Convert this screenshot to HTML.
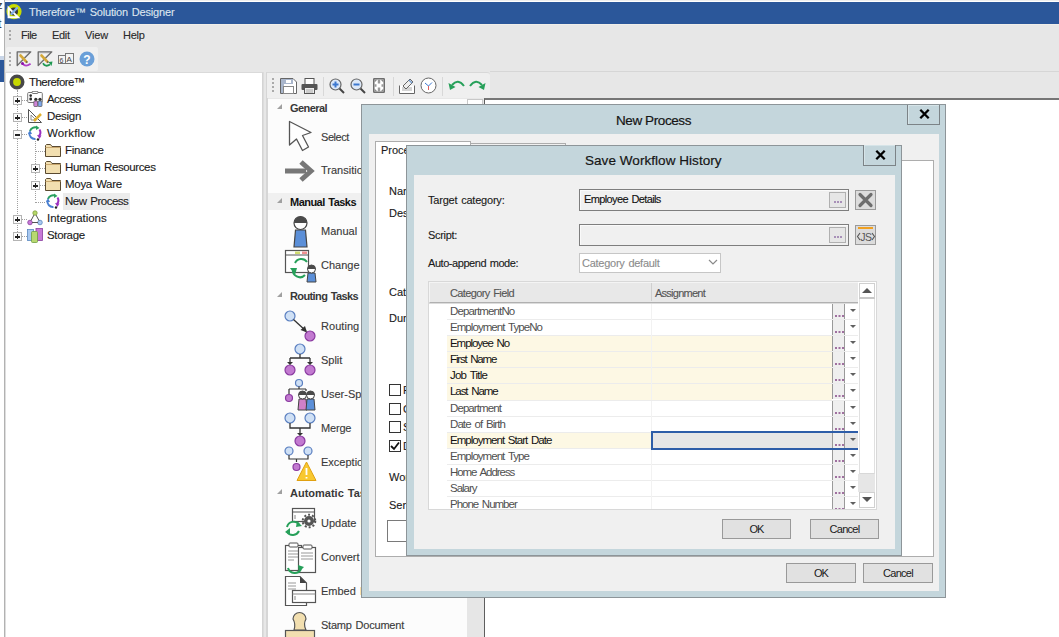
<!DOCTYPE html>
<html><head><meta charset="utf-8">
<style>
*{margin:0;padding:0;box-sizing:border-box}
html,body{width:1059px;height:637px;overflow:hidden;background:#fff;font-family:"Liberation Sans",sans-serif;font-size:12px;color:#222}
.a{position:absolute}
.t{position:absolute;white-space:nowrap;line-height:14px;word-spacing:1px;-webkit-text-stroke:0.12px currentColor}
/* title */
#strip{left:0;top:0;width:5px;height:637px;background:#fff;border-right:1px solid #b2b2b2}
#titlebar{left:5px;top:2px;width:1054px;height:23px;background:#2b579a;border-bottom:1px solid #f0eee9}
#titletxt{color:#dde5ee;font-size:11px}
#app{left:5px;top:23px;width:1054px;height:614px;background:#e7e7e7}
.menu{top:28px;font-size:11px;color:#2a2a2a}
.grip3{width:2px;height:2px;background:#a8a8a8;box-shadow:0 4px 0 #a8a8a8,0 8px 0 #a8a8a8}
.grip{width:2px;height:2px;background:#aaa;box-shadow:0 4px 0 #aaa,0 8px 0 #aaa,0 12px 0 #aaa}
#tbar1{left:6px;top:47px;width:92px;height:24px;background:#f0f0f0;border-radius:2px}
/* tree */
#tree{left:5px;top:72px;width:258px;height:565px;background:#fff;border-left:1px solid #dedede;border-top:1px solid #dadada;border-right:1px solid #d4d4d4}
.ti{font-size:11.5px;color:#1b1b1b}
.exp{position:absolute;width:9px;height:9px;border:1px solid #b4b4b4;background:#fbfbfb}
.exp:before{content:"";position:absolute;left:1px;top:3px;width:5px;height:1.5px;background:#222}
.exp.p:after{content:"";position:absolute;left:2.75px;top:1px;width:1.5px;height:5px;background:#222}
.vd{position:absolute;width:0;border-left:1px dotted #a0a0a0}
.hd{position:absolute;height:0;border-top:1px dotted #a0a0a0}
/* palette */
#splitline{left:266px;top:72px;width:2px;height:565px;background:#d6d6d6}
#ptbar{left:267px;top:72px;width:223px;height:26px;background:#efefef;border-top:1px solid #d8d8d8;border-radius:0 3px 0 0}
#pal{left:268px;top:99px;width:199px;height:538px;background:#fcfcfc}
#pscroll{left:467px;top:99px;width:17px;height:538px;background:#e6e6e6}
#pline{left:484px;top:98px;width:1px;height:539px;background:#5e5e5e}
#canvas{left:484px;top:98px;width:575px;height:539px;background:#fff;border-top:2px solid #767676;border-left:1px solid #5e5e5e}
.ph{font-size:11px;font-weight:bold;color:#383838;-webkit-text-stroke:0}
.pi{font-size:11px;color:#3a3a3a}
.tri{position:absolute;width:0;height:0;border-left:5px solid transparent;border-bottom:5px solid #a0a0a0}
/* dialogs */
.dlg{position:absolute;background:#c4d6dc;border:1px solid #8d9599}
.client{position:absolute;background:#f0f0f0}
.dtitle{position:absolute;font-size:13.5px;color:#151515;white-space:nowrap;line-height:14px;-webkit-text-stroke:0.2px currentColor}
.xbtn{position:absolute;border:1px solid #7c8387;border-top:none;background:#c4d6dc}
.xbtn svg{position:absolute;left:11px;top:4px}
.btn{position:absolute;background:#e1e1e1;border:1px solid #999;text-align:center;font-size:11px;color:#1a1a1a;line-height:18px}
.lbl{font-size:11px;color:#1a1a1a}
.inp{position:absolute;background:#f0f0f0;border:1px solid #7e7e7e;box-shadow:inset 1px 1px 0 #fafafa}
.dots{position:absolute;background:#e6e6e6;border:1px solid #b0b0b0}
.dots:after{content:"";position:absolute;left:4px;bottom:4px;width:2px;height:2px;background:#a890b8;box-shadow:3px 0 0 #a890b8,6px 0 0 #a890b8}
/* grid */
#grid{left:428px;top:281px;width:449px;height:229px;background:#fff;border:1px solid #d8d8d8}
.row{position:absolute;left:18px;width:411px;height:16px;border-bottom:1px solid #ececec}
.ybg{position:absolute;left:0;top:0;width:385px;height:15px;background:#fdf8e4}
.ct{position:absolute;left:3px;top:0px;font-size:11.5px;word-spacing:1.5px;color:#505050;white-space:nowrap;line-height:14px}
.row .ybg+.ct{color:#111}
.cdiv{position:absolute;left:204px;top:0;width:1px;height:16px;background:#f2f2f2}
.rdots{position:absolute;left:385px;top:0px;width:13px;height:15px;background:#efefef;border-left:1px solid #9a9a9a;border-right:1px solid #9a9a9a}
.rdots:after{content:"";position:absolute;left:2px;bottom:2px;width:2px;height:2px;background:#a070a0;box-shadow:3.5px 0 0 #a070a0,7px 0 0 #a070a0}
.rarr{position:absolute;left:403px;top:5px;width:0;height:0;border-left:3px solid transparent;border-right:3px solid transparent;border-top:3px solid #606060}
/*FIT*/#titletxt{letter-spacing:-0.185px}#x3{letter-spacing:-0.509px}#x4{letter-spacing:-0.317px}#x5{letter-spacing:-0.139px}#x6{letter-spacing:-0.281px}#x7{letter-spacing:-0.556px}#x8{letter-spacing:-0.596px}#x9{letter-spacing:-0.302px}#x10{letter-spacing:0.153px}#x11{letter-spacing:-0.346px}#x12{letter-spacing:-0.382px}#x13{letter-spacing:-0.286px}#x14{letter-spacing:-0.495px}#x15{letter-spacing:-0.042px}#x16{letter-spacing:-0.369px}#x17{letter-spacing:-0.567px}#x18{letter-spacing:-0.430px}#x20{letter-spacing:-0.527px}#x23{letter-spacing:-0.614px}#x24{letter-spacing:0.040px}#x25{letter-spacing:-0.021px}#x27{letter-spacing:-0.177px}#x33{letter-spacing:-0.213px}#x34{letter-spacing:-0.412px}#x48{letter-spacing:0.050px}#x49{letter-spacing:-0.211px}#x50{letter-spacing:-0.312px}#x51{letter-spacing:-0.449px}#x52{letter-spacing:-0.618px}#x54{letter-spacing:-0.257px}#x57{letter-spacing:-0.610px}#x58{letter-spacing:-0.748px}#g1{letter-spacing:-0.866px}#g2{letter-spacing:-0.944px}#g3{letter-spacing:-1.050px}#g4{letter-spacing:-1.143px}#g5{letter-spacing:-0.814px}#g6{letter-spacing:-1.057px}#g7{letter-spacing:-0.909px}#g8{letter-spacing:-0.917px}#g9{letter-spacing:-0.976px}#g10{letter-spacing:-0.956px}#g11{letter-spacing:-1.053px}#g12{letter-spacing:-1.002px}#g13{letter-spacing:-1.013px}#x46{letter-spacing:-0.853px}#x47{letter-spacing:-0.708px}#x55{letter-spacing:-0.853px}#x56{letter-spacing:-0.708px}/*ENDFIT*/
</style></head><body>
<div id="strip" class="a"></div>
<div class="a" style="left:0;top:56px;width:4px;height:4px;background:#c9d6e8"></div>
<div class="a" style="left:0;top:60px;width:4px;height:22px;background:#2b579a"></div>
<div class="a" style="left:0;top:0;width:4px;height:40px;overflow:hidden"><div id="x1" class="t" style="left:-3px;top:-2px;font-size:11px;color:#333">z</div><div id="x2" class="t" style="left:-2px;top:17px;font-size:12px;color:#3a3a4a">t</div></div>
<div id="app" class="a"></div>
<div id="titlebar" class="a"></div>
<div class="a" style="left:5px;top:0;width:1054px;height:1px;background:#eeeeee"></div>
<div id="titletxt" class="t" style="left:29px;top:5px">Therefore™ Solution Designer</div>


<!-- logo -->
<svg class="a" style="left:0px;top:0px" width="28" height="26" viewBox="0 0 28 26">
<circle cx="14" cy="11.6" r="5.8" fill="#3a3a3a" stroke="#c8dc00" stroke-width="3.6"/>
<path d="M7.6 5.4 L20.4 18.2 H7.6 Z M9.6 10.2 V16.2 H15.6 Z" fill="#fff" fill-rule="evenodd"/>
<path d="M11.5 14 L17 8" stroke="#86b0e8" stroke-width="2.2" stroke-linecap="round"/>
</svg>
<!-- menu -->
<div class="a grip3" style="left:9px;top:30px"></div>
<div id="x3" class="t menu" style="left:21px">File</div>
<div id="x4" class="t menu" style="left:52px">Edit</div>
<div id="x5" class="t menu" style="left:85px">View</div>
<div id="x6" class="t menu" style="left:123px">Help</div>
<div id="tbar1" class="a"></div>
<div class="a grip" style="left:9px;top:52px"></div>
<!-- toolbar icons -->
<svg class="a" style="left:16px;top:51px" width="16" height="16" viewBox="0 0 16 16"><path d="M1.2 0.8 H14.8 L1.2 14.6 Z" fill="#e2e2e2" stroke="#6a6a6a" stroke-width="1.3" stroke-linejoin="round"/><path d="M3.5 3 H10.5 L3.5 10 Z" fill="#f6f6f6"/><path d="M4.5 4.5 L10.5 10.8" stroke="#d4a838" stroke-width="2.6" stroke-linecap="round"/><path d="M10.2 10.5 L11.2 11.5" stroke="#555" stroke-width="1.5"/><path d="M6.8 12.8 Q9.5 16.5 14.6 12.8" stroke="#b040c8" stroke-width="1.8" fill="none"/><circle cx="6.5" cy="12.5" r="1.5" fill="#8a10a8"/></svg>
<svg class="a" style="left:37px;top:51px" width="16" height="16" viewBox="0 0 16 16"><path d="M1.2 0.8 H14.8 L1.2 14.6 Z" fill="#e2e2e2" stroke="#6a6a6a" stroke-width="1.3" stroke-linejoin="round"/><path d="M3.5 3 H10.5 L3.5 10 Z" fill="#f6f6f6"/><path d="M4.5 4.5 L10.5 10.8" stroke="#d4a838" stroke-width="2.6" stroke-linecap="round"/><path d="M10.2 10.5 L11.2 11.5" stroke="#555" stroke-width="1.5"/><path d="M6 12.2 Q8.5 16.5 13 13.5" stroke="#1e9850" stroke-width="1.8" fill="none"/><path d="M11.5 11 L15.5 10.5 L14.5 15 Z" fill="#1e9850"/></svg>
<svg class="a" style="left:58px;top:52px" width="16" height="14" viewBox="0 0 16 14">
<rect x="0.5" y="3.5" width="7" height="8" fill="#f3f3f3" stroke="#777"/>
<rect x="7.5" y="1.5" width="8" height="10" fill="#f3f3f3" stroke="#777"/>
<text x="1.5" y="10.5" font-size="7" fill="#444" font-family="Liberation Sans">6</text>
<text x="8.5" y="10" font-size="8" fill="#444" font-family="Liberation Sans">A</text>
</svg>
<svg class="a" style="left:79px;top:51px" width="16" height="16" viewBox="0 0 16 16">
<circle cx="8" cy="8" r="7.5" fill="#6a9fd8"/>
<text x="8" y="12.5" text-anchor="middle" font-size="12" font-weight="bold" fill="#fff" font-family="Liberation Sans">?</text>
</svg>
<!-- tree -->
<div id="tree" class="a"></div>
<svg class="a" style="left:9px;top:74px" width="16" height="16" viewBox="0 0 16 16">
<circle cx="8" cy="8" r="5.7" fill="#c6d800" stroke="#484848" stroke-width="3.6"/>
</svg>
<div id="x7" class="t ti" style="left:29px;top:75px">Therefore™</div>
<div class="vd" style="left:17px;top:90px;height:146px"></div>
<div class="vd" style="left:35px;top:141px;height:59px"></div>
<div class="hd" style="left:18px;top:100px;width:9px"></div><div class="exp p" style="left:13px;top:96px"></div>
<svg class="a" style="left:27px;top:91px" width="16" height="16" viewBox="0 0 16 16"><rect x="0.7" y="1.5" width="14.6" height="10" rx="1" fill="#fff" stroke="#777" stroke-width="1"/><rect x="5" y="0.3" width="6" height="2.2" rx="1" fill="#fff" stroke="#666" stroke-width="0.9"/><circle cx="3.7" cy="4.6" r="1.3" fill="#2a2a2a"/><rect x="2.4" y="6.4" width="2.6" height="3.2" rx="1" fill="#2a2a2a"/><circle cx="8.8" cy="8.3" r="1.6" fill="#333"/><circle cx="13" cy="8.3" r="1.6" fill="#333"/><rect x="6.8" y="10" width="4" height="5.5" rx="0.8" fill="#cf86d8" stroke="#555" stroke-width="0.7"/><rect x="11" y="10" width="4" height="5.5" rx="0.8" fill="#7fa8ea" stroke="#555" stroke-width="0.7"/></svg>
<div id="x8" class="t ti" style="left:47px;top:92px">Access</div>
<div class="hd" style="left:18px;top:117px;width:9px"></div><div class="exp p" style="left:13px;top:113px"></div>
<svg class="a" style="left:27px;top:108px" width="16" height="16" viewBox="0 0 16 16"><path d="M1.5 1.5 V14.5 H14.5 Z" fill="#fff" stroke="#555"/><path d="M4 7 V12 H9 Z" fill="#fff" stroke="#777" stroke-width="0.8"/><path d="M7 13 L14 6" stroke="#e0b030" stroke-width="2.5"/></svg>
<div id="x9" class="t ti" style="left:47px;top:109px">Design</div>
<div class="hd" style="left:18px;top:134px;width:9px"></div><div class="exp m" style="left:13px;top:130px"></div>
<svg class="a" style="left:27px;top:125px" width="16" height="16" viewBox="0 0 16 16"><path d="M3 6 A5.5 5.5 0 0 1 10 2.5" stroke="#2aa060" stroke-width="2" fill="none"/><path d="M9 0.5 L12.5 3 L9 5 Z" fill="#2aa060"/><path d="M12.5 4.5 A5.5 5.5 0 0 1 12 11" stroke="#9b30c0" stroke-width="2" fill="none"/><path d="M10 10 L14.5 10.5 L12.5 14 Z" fill="#9b30c0"/><path d="M8.5 14 A5.5 5.5 0 0 1 2.5 7.5" stroke="#4a7fd0" stroke-width="2" fill="none"/><path d="M1 9 L3 5 L5 9 Z" fill="#4a7fd0"/><circle cx="11" cy="14.5" r="1.2" fill="#222"/></svg>
<div id="x10" class="t ti" style="left:47px;top:126px">Workflow</div>
<div class="hd" style="left:35px;top:151px;width:10px"></div>
<svg class="a" style="left:45px;top:142px" width="16" height="16" viewBox="0 0 16 16"><path d="M0.5 3.5 V14.5 H15.5 V4.5 H7 L5.5 2.5 H1.5 Z" fill="#f2dfb0" stroke="#5a4a30" stroke-width="1"/><path d="M0.5 5.5 H15.5" stroke="#c9a870" stroke-width="1"/></svg>
<div id="x11" class="t ti" style="left:65px;top:143px">Finance</div>
<div class="hd" style="left:36px;top:168px;width:9px"></div><div class="exp p" style="left:31px;top:164px"></div>
<svg class="a" style="left:45px;top:159px" width="16" height="16" viewBox="0 0 16 16"><path d="M0.5 3.5 V14.5 H15.5 V4.5 H7 L5.5 2.5 H1.5 Z" fill="#f2dfb0" stroke="#5a4a30" stroke-width="1"/><path d="M0.5 5.5 H15.5" stroke="#c9a870" stroke-width="1"/></svg>
<div id="x12" class="t ti" style="left:65px;top:160px">Human Resources</div>
<div class="hd" style="left:36px;top:185px;width:9px"></div><div class="exp p" style="left:31px;top:181px"></div>
<svg class="a" style="left:45px;top:176px" width="16" height="16" viewBox="0 0 16 16"><path d="M0.5 3.5 V14.5 H15.5 V4.5 H7 L5.5 2.5 H1.5 Z" fill="#f2dfb0" stroke="#5a4a30" stroke-width="1"/><path d="M0.5 5.5 H15.5" stroke="#c9a870" stroke-width="1"/></svg>
<div id="x13" class="t ti" style="left:65px;top:177px">Moya Ware</div>
<div class="hd" style="left:35px;top:202px;width:10px"></div>
<div class="a" style="left:63px;top:193px;width:67px;height:17px;background:#ececec"></div><svg class="a" style="left:45px;top:193px" width="16" height="16" viewBox="0 0 16 16"><path d="M3 6 A5.5 5.5 0 0 1 10 2.5" stroke="#2aa060" stroke-width="2" fill="none"/><path d="M9 0.5 L12.5 3 L9 5 Z" fill="#2aa060"/><path d="M12.5 4.5 A5.5 5.5 0 0 1 12 11" stroke="#9b30c0" stroke-width="2" fill="none"/><path d="M10 10 L14.5 10.5 L12.5 14 Z" fill="#9b30c0"/><path d="M8.5 14 A5.5 5.5 0 0 1 2.5 7.5" stroke="#4a7fd0" stroke-width="2" fill="none"/><path d="M1 9 L3 5 L5 9 Z" fill="#4a7fd0"/><circle cx="11" cy="14.5" r="1.2" fill="#222"/></svg>
<div id="x14" class="t ti" style="left:65px;top:194px">New Process</div>
<div class="hd" style="left:18px;top:219px;width:9px"></div><div class="exp p" style="left:13px;top:215px"></div>
<svg class="a" style="left:27px;top:210px" width="16" height="16" viewBox="0 0 16 16"><circle cx="8" cy="3" r="2.2" fill="#b7d86a" stroke="#80a040" stroke-width="0.8"/><circle cx="3" cy="12.5" r="2.3" fill="#c77ad6" stroke="#8a40a0" stroke-width="0.8"/><circle cx="13" cy="12.5" r="2.3" fill="#a8c8f0" stroke="#5a88c0" stroke-width="0.8"/><path d="M7 5 L4 10.5 M9 5 L12 10.5 M5 12.5 H11" stroke="#555" stroke-width="1"/></svg>
<div id="x15" class="t ti" style="left:47px;top:211px">Integrations</div>
<div class="hd" style="left:18px;top:236px;width:9px"></div><div class="exp p" style="left:13px;top:232px"></div>
<svg class="a" style="left:27px;top:227px" width="16" height="16" viewBox="0 0 16 16"><rect x="0.5" y="2.5" width="6" height="11" fill="#a8c8f0" stroke="#5a88c0" stroke-width="0.8"/><rect x="9" y="1.5" width="6.5" height="12" fill="#c77ad6" stroke="#8a40a0" stroke-width="0.8"/><rect x="4.5" y="4.5" width="6" height="11" rx="1" fill="#b8d870" stroke="#70a040" stroke-width="0.8"/></svg>
<div id="x16" class="t ti" style="left:47px;top:228px">Storage</div>

<!-- palette -->
<div class="a" style="left:263px;top:72px;width:1px;height:565px;background:#dcdcdc"></div>
<div id="splitline" class="a"></div>
<div id="ptbar" class="a"></div>
<div class="a" style="left:490px;top:71px;width:569px;height:1px;background:#d6d6d6"></div>
<div class="a grip" style="left:272px;top:78px"></div>
<svg class="a" style="left:280px;top:78px" width="17" height="16" viewBox="0 0 17 16">
<path d="M0.5 0.5 H13 L16.5 4 V15.5 H0.5 Z" fill="#fff" stroke="#666"/>
<rect x="1" y="1" width="3" height="14" fill="#a9b6cc"/>
<rect x="4" y="1" width="9" height="5" fill="#a9b6cc"/><rect x="6" y="2" width="5" height="3" fill="#fff"/>
<rect x="3.5" y="8.5" width="10" height="7" fill="#fff" stroke="#888"/>
</svg>
<svg class="a" style="left:301px;top:78px" width="17" height="16" viewBox="0 0 17 16">
<rect x="4" y="0.5" width="9" height="6" fill="#fff" stroke="#555"/>
<rect x="0.5" y="6" width="16" height="6" rx="1" fill="#555"/>
<rect x="3.5" y="9.5" width="10" height="6" fill="#eee" stroke="#555"/>
<path d="M5 12 H12 M5 14 H12" stroke="#aaa"/>
</svg>
<div class="a" style="left:323px;top:77px;width:1px;height:19px;background:#d8d8d8"></div>
<svg class="a" style="left:329px;top:78px" width="17" height="17" viewBox="0 0 17 17">
<path d="M9 9 L15 15" stroke="#444" stroke-width="2"/>
<circle cx="6.5" cy="6.5" r="5.5" fill="#dce8f8" stroke="#666" stroke-width="1.2"/>
<path d="M3.5 6.5 H9.5 M6.5 3.5 V9.5" stroke="#3c78d0" stroke-width="2"/>
</svg>
<svg class="a" style="left:350px;top:78px" width="17" height="17" viewBox="0 0 17 17">
<path d="M9 9 L15 15" stroke="#444" stroke-width="2"/>
<circle cx="6.5" cy="6.5" r="5.5" fill="#dce8f8" stroke="#666" stroke-width="1.2"/>
<path d="M3.5 6.5 H9.5" stroke="#3c78d0" stroke-width="2"/>
</svg>
<svg class="a" style="left:373px;top:78px" width="12" height="15" viewBox="0 0 12 15"><rect x="0.75" y="0.75" width="10.5" height="13.5" rx="0.5" fill="#fff" stroke="#6e6e6e" stroke-width="1.5"/><path d="M1.5 1.5 H4.5 L1.5 4.5 Z M10.5 1.5 H7.5 L10.5 4.5 Z M1.5 13.5 H4.5 L1.5 10.5 Z M10.5 13.5 H7.5 L10.5 10.5 Z" fill="#8a8a8a"/><path d="M4.8 1.5 V5.5 H7.2 V1.5 M4.8 13.5 V9.5 H7.2 V13.5" fill="#9a9a9a"/><path d="M1.5 6.3 H3.5 V8.7 H1.5 Z M10.5 6.3 H8.5 V8.7 H10.5 Z" fill="#9a9a9a"/></svg>
<div class="a" style="left:393px;top:77px;width:1px;height:19px;background:#d8d8d8"></div>
<svg class="a" style="left:399px;top:77px" width="17" height="17" viewBox="0 0 17 17">
<path d="M0.5 8.5 V16.5 H15.5 V8.5" fill="#fff" stroke="#666"/>
<path d="M3 11 H13 M3 13 H13" stroke="#aaa"/>
<path d="M4 9 L11 2 L14 5 L7 12 Z" fill="#eee" stroke="#666"/>
<path d="M10 3 L13 6" stroke="#7aa0d0" stroke-width="1.5"/>
</svg>
<svg class="a" style="left:420px;top:77px" width="17" height="17" viewBox="0 0 17 17">
<circle cx="8.5" cy="8.5" r="7.5" fill="#fff" stroke="#666"/>
<path d="M5 6 L8.5 9 L12 5.5" stroke="#3c78d0" fill="none"/>
<path d="M8.5 9 V13" stroke="#e06060"/>
</svg>
<div class="a" style="left:442px;top:77px;width:1px;height:19px;background:#d8d8d8"></div>
<svg class="a" style="left:448px;top:79px" width="17" height="12" viewBox="0 0 17 12">
<path d="M4 6 Q10 -1 16 7" stroke="#27a05a" stroke-width="2" fill="none"/>
<path d="M0.5 4 L2 11 L7.5 8 Z" fill="#27a05a"/>
</svg>
<svg class="a" style="left:469px;top:79px" width="17" height="12" viewBox="0 0 17 12">
<path d="M13 6 Q7 -1 1 7" stroke="#27a05a" stroke-width="2" fill="none"/>
<path d="M16.5 4 L15 11 L9.5 8 Z" fill="#27a05a"/>
</svg>
<div id="pal" class="a"></div>
<div id="pscroll" class="a"></div>
<div class="a" style="left:467px;top:99px;width:16px;height:8px;background:#fff;border:1px solid #c8c8c8;border-bottom:none"></div>
<div id="pline" class="a"></div>
<div id="canvas" class="a"></div>

<div class="a" style="left:268px;top:193px;width:93px;height:17px;background:#f0f0f0"></div>
<div class="tri" style="left:277px;top:104px"></div>
<div id="x17" class="t ph" style="left:290px;top:101px">General</div>
<svg class="a" style="left:288px;top:120px" width="25" height="32" viewBox="0 0 25 32">
<path d="M1.5 1.5 L23 12.5 L14.5 15.5 L20.5 27 L14.5 30.5 L8.5 19 L1.5 25 Z" fill="#fff" stroke="#555" stroke-width="1.3" stroke-linejoin="round"/>
</svg>
<div id="x18" class="t pi" style="left:321px;top:130px">Select</div>
<svg class="a" style="left:284px;top:160px" width="33" height="22" viewBox="0 0 33 22">
<path d="M1 11 H22" stroke="#777" stroke-width="5"/>
<path d="M17 2 L27 11 L17 20" stroke="#777" stroke-width="5" fill="none" stroke-linejoin="miter"/>
</svg>
<div id="x19" class="t pi" style="left:321px;top:163px">Transition</div>
<div class="tri" style="left:277px;top:198px"></div>
<div id="x20" class="t ph" style="left:290px;top:195px;color:#111">Manual Tasks</div>
<svg class="a" style="left:291px;top:215px" width="19" height="33" viewBox="0 0 19 33">
<path d="M3 32 L4.5 15 H14.5 L16 32 Z" fill="#5b8fd8" stroke="#444" stroke-width="1.2"/>
<circle cx="9.5" cy="8" r="6.5" fill="#fff" stroke="#444" stroke-width="1.2"/>
<path d="M3 8 A6.5 6.5 0 0 1 16 8 Z" fill="#4a4a4a"/>
<path d="M6 9.5 Q9.5 13 13 9.5" fill="#fff"/>
</svg>
<div id="x21" class="t pi" style="left:321px;top:224px">Manual Task</div>
<svg class="a" style="left:284px;top:249px" width="33" height="34" viewBox="0 0 33 34">
<rect x="1.5" y="1.5" width="23" height="22" fill="#fff" stroke="#555" stroke-width="1.2"/>
<path d="M1.5 6 H24.5" stroke="#555"/>
<rect x="11" y="2.5" width="5" height="2.5" fill="#d0dc70"/><rect x="18" y="2.5" width="5" height="2.5" fill="#f09090"/>
<path d="M11 14 A7 7 0 0 1 23 13" stroke="#27a05a" stroke-width="2" fill="none"/>
<path d="M21 26 A7 7 0 0 1 9 20" stroke="#27a05a" stroke-width="2" fill="none"/>
<path d="M6 19 L11 26 L13 19 Z" fill="#27a05a"/>
<path d="M23 33 L24 24 H31 L32 33 Z" fill="#5b8fd8" stroke="#444"/>
<circle cx="27.5" cy="20" r="4" fill="#fff" stroke="#444"/>
<path d="M23.5 20 A4 4 0 0 1 31.5 20 Z" fill="#4a4a4a"/>
</svg>
<div id="x22" class="t pi" style="left:321px;top:258px">Change Task</div>
<div class="tri" style="left:277px;top:292px"></div>
<div id="x23" class="t ph" style="left:290px;top:289px">Routing Tasks</div>
<svg class="a" style="left:284px;top:309px" width="33" height="34" viewBox="0 0 33 34">
<circle cx="6" cy="7" r="5" fill="#cfe0f5" stroke="#5a7fc0" stroke-width="1.2"/><circle cx="26" cy="27" r="5" fill="#c27ad0" stroke="#8a3aa0" stroke-width="1.2"/><path d="M9.5 10.5 L22 22" stroke="#333" stroke-width="1.3"/><path d="M23 23.5 L16.5 21 L21 17 Z" fill="#333"/>
</svg>
<div id="x24" class="t pi" style="left:321px;top:319px">Routing</div>
<svg class="a" style="left:284px;top:343px" width="33" height="34" viewBox="0 0 33 34">
<circle cx="16" cy="6" r="5" fill="#cfe0f5" stroke="#5a7fc0" stroke-width="1.2"/><circle cx="6" cy="27" r="5" fill="#c27ad0" stroke="#8a3aa0" stroke-width="1.2"/><circle cx="26" cy="27" r="5" fill="#c27ad0" stroke="#8a3aa0" stroke-width="1.2"/><path d="M16 11 V15 M6 15 H26 M6 15 V20 M26 15 V20" stroke="#333" stroke-width="1.3" fill="none"/><path d="M3 19 H9 L6 22Z M23 19 H29 L26 22Z" fill="#333"/>
</svg>
<div id="x25" class="t pi" style="left:321px;top:353px">Split</div>
<svg class="a" style="left:284px;top:377px" width="33" height="34" viewBox="0 0 33 34">
<circle cx="15" cy="6" r="3.5" fill="#cfe0f5" stroke="#5a7fc0" stroke-width="1.2"/><circle cx="5" cy="21" r="3.5" fill="#c27ad0" stroke="#8a3aa0" stroke-width="1.2"/><path d="M15 9.5 V12 M5 12 H22 M5 12 V17 M22 12 V14" stroke="#333" stroke-width="1.2" fill="none"/>
<path d="M14 33 L15 22 H22 L23 33 Z" fill="#d080c8" stroke="#444"/><circle cx="18.5" cy="18" r="4" fill="#fff" stroke="#444"/><path d="M14.5 18 A4 4 0 0 1 22.5 18 Z" fill="#4a4a4a"/>
<path d="M22 33 L23 22 H30 L31 33 Z" fill="#5b8fd8" stroke="#444"/><circle cx="26.5" cy="18" r="4" fill="#fff" stroke="#444"/><path d="M22.5 18 A4 4 0 0 1 30.5 18 Z" fill="#4a4a4a"/>
</svg>
<div id="x26" class="t pi" style="left:321px;top:387px">User-Split</div>
<svg class="a" style="left:284px;top:411px" width="33" height="36" viewBox="0 0 33 36">
<circle cx="6" cy="7" r="5" fill="#cfe0f5" stroke="#5a7fc0" stroke-width="1.2"/><circle cx="26" cy="7" r="5" fill="#cfe0f5" stroke="#5a7fc0" stroke-width="1.2"/><circle cx="16" cy="30" r="5" fill="#c27ad0" stroke="#8a3aa0" stroke-width="1.2"/><path d="M6 12 V17 H26 V12 M16 17 V23" stroke="#333" stroke-width="1.3" fill="none"/><path d="M13 22 H19 L16 25Z" fill="#333"/>
</svg>
<div id="x27" class="t pi" style="left:321px;top:421px">Merge</div>
<svg class="a" style="left:284px;top:445px" width="33" height="38" viewBox="0 0 33 38">
<circle cx="5" cy="6" r="4" fill="#cfe0f5" stroke="#5a7fc0" stroke-width="1.2"/><circle cx="24" cy="6" r="4" fill="#cfe0f5" stroke="#5a7fc0" stroke-width="1.2"/><circle cx="12.5" cy="22" r="3.5" fill="#c27ad0" stroke="#8a3aa0" stroke-width="1.2"/><path d="M5 10 V14 H24 V10 M12.5 14 V17" stroke="#333" stroke-width="1.2" fill="none"/>
<path d="M22.5 17 L32 35.5 H13 Z" fill="#f8c830" stroke="#e0a010" stroke-width="1"/><path d="M22.5 23 V30 M22.5 32 V33.5" stroke="#fff" stroke-width="1.8"/>
</svg>
<div id="x28" class="t pi" style="left:321px;top:455px">Exception</div>
<div class="tri" style="left:277px;top:489px"></div>
<div id="x29" class="t ph" style="left:290px;top:486px">Automatic Tasks</div>
<svg class="a" style="left:284px;top:507px" width="33" height="30" viewBox="0 0 33 30">
<rect x="8.5" y="1.5" width="22" height="13" fill="#fff" stroke="#555" stroke-width="1.2"/><path d="M8.5 5 H30.5" stroke="#555"/><path d="M11 8 V12" stroke="#888"/>
<circle cx="25" cy="14" r="5" fill="#555"/><circle cx="25" cy="14" r="6.3" fill="none" stroke="#555" stroke-width="2" stroke-dasharray="2 2"/><circle cx="25" cy="14" r="1.6" fill="#fff"/>
<path d="M3 20 A7 7 0 0 1 15 17" stroke="#27a05a" stroke-width="2" fill="none"/><path d="M15 24 A7 7 0 0 1 3 25" stroke="#27a05a" stroke-width="2" fill="none"/>
<path d="M13 14 L18 19 L12 20 Z M1 25 L6 21 L6 28 Z" fill="#27a05a"/>
</svg>
<div id="x30" class="t pi" style="left:321px;top:516px">Update Index</div>
<svg class="a" style="left:284px;top:542px" width="33" height="32" viewBox="0 0 33 32">
<rect x="1.5" y="3.5" width="16" height="25" fill="#fff" stroke="#555" stroke-width="1.2"/><rect x="5" y="1" width="9" height="4" rx="1" fill="#fff" stroke="#555"/>
<path d="M4 9 H14 M4 12 H14 M4 15 H14 M4 18 H10" stroke="#999"/>
<rect x="14.5" y="5.5" width="17" height="25" fill="#fff" stroke="#555" stroke-width="1.2"/><rect x="19" y="3" width="9" height="4" rx="1" fill="#fff" stroke="#555"/>
<path d="M17 11 H29 M17 14 H29 M17 17 H29" stroke="#999"/>
<path d="M4 26 A7 7 0 0 0 17 27" stroke="#27a05a" stroke-width="2" fill="none"/><path d="M14 23 L20 25 L15 30 Z" fill="#27a05a"/>
</svg>
<div id="x31" class="t pi" style="left:321px;top:550px">Convert</div>
<svg class="a" style="left:284px;top:575px" width="33" height="32" viewBox="0 0 33 32">
<path d="M1.5 1.5 H16 L22.5 8 V30.5 H1.5 Z" fill="#fff" stroke="#555" stroke-width="1.2"/><path d="M16 1.5 V8 H22.5 Z" fill="#444"/>
<path d="M4 8 H12 M4 11 H12 M4 14 H12" stroke="#999"/>
<rect x="8.5" y="15.5" width="23" height="12" fill="#fff" stroke="#555" stroke-width="1.2"/><path d="M8.5 19 H31.5" stroke="#888"/><path d="M11 21 V25" stroke="#888"/>
</svg>
<div id="x32" class="t pi" style="left:321px;top:584px">Embed Index</div>
<svg class="a" style="left:284px;top:610px" width="33" height="28" viewBox="0 0 33 28">
<path d="M10 20 Q12 14 9 9 A6.5 6.5 0 1 1 22 9 Q19 14 22 20 Z" fill="#f2dfb0" stroke="#555" stroke-width="1.2"/>
<rect x="1.5" y="20.5" width="29" height="8" fill="#f2dfb0" stroke="#555" stroke-width="1.2"/>
</svg>
<div id="x33" class="t pi" style="left:321px;top:618px">Stamp Document</div>

<!-- New Process dialog -->
<div class="dlg" style="left:361px;top:104px;width:585px;height:494px"></div>
<div class="client" style="left:369px;top:134px;width:570px;height:457px"></div>
<div id="x34" class="dtitle" style="left:616px;top:114px">New Process</div>
<div class="xbtn" style="left:907px;top:105px;width:33px;height:20px;box-shadow:inset 1px 1px 0 #d6e4e8"><svg width="11" height="10" viewBox="0 0 11 10"><path d="M1.3 0.8 L9.7 9.2 M9.7 0.8 L1.3 9.2" stroke="#000" stroke-width="2.3"/></svg></div>
<div class="a" style="left:470px;top:143px;width:96px;height:18px;background:#f0f0f0;border:1px solid #adadad;border-bottom:none"></div>
<div class="a" style="left:375px;top:160px;width:559px;height:397px;background:#fff;border:1px solid #adadad"></div>
<div class="a" style="left:375px;top:141px;width:96px;height:21px;background:#fff;border:1px solid #adadad;border-bottom:none"></div>
<div id="x35" class="t lbl" style="left:381px;top:143px">Process</div>
<div id="x36" class="t lbl" style="left:389px;top:184px">Name:</div>
<div id="x37" class="t lbl" style="left:389px;top:206px">Description:</div>
<div id="x38" class="t lbl" style="left:389px;top:285px">Category:</div>
<div id="x39" class="t lbl" style="left:389px;top:311px">Duration:</div>
<div class="a" style="left:389px;top:384px;width:12px;height:12px;border:1px solid #333;background:#fff"></div>
<div class="a" style="left:389px;top:403px;width:12px;height:12px;border:1px solid #333;background:#fff"></div>
<div class="a" style="left:389px;top:421px;width:12px;height:12px;border:1px solid #333;background:#fff"></div>
<div class="a" style="left:389px;top:440px;width:12px;height:12px;border:1px solid #333;background:#fff"></div>
<svg class="a" style="left:390px;top:441px" width="10" height="10" viewBox="0 0 10 10"><path d="M1 5 L4 8 L9 1.5" stroke="#111" stroke-width="1.8" fill="none"/></svg>
<div id="x40" class="t lbl" style="left:403px;top:383px">F</div>
<div id="x41" class="t lbl" style="left:403px;top:402px">C</div>
<div id="x42" class="t lbl" style="left:403px;top:420px">S</div>
<div id="x43" class="t lbl" style="left:403px;top:439px">D</div>
<div id="x44" class="t lbl" style="left:389px;top:470px">Workflow</div>
<div id="x45" class="t lbl" style="left:389px;top:498px">Send</div>
<div class="a" style="left:387px;top:520px;width:100px;height:22px;border:1px solid #7a7a7a;background:#fff"></div>
<div id="x46" class="btn" style="left:786px;top:563px;width:70px;height:20px">OK</div>
<div id="x47" class="btn" style="left:863px;top:563px;width:70px;height:20px">Cancel</div>

<!-- Save Workflow History -->
<div class="dlg" style="left:406px;top:145px;width:496px;height:411px"></div>
<div class="client" style="left:414px;top:175px;width:481px;height:374px"></div>
<div id="x48" class="dtitle" style="left:585px;top:154px">Save Workflow History</div>
<div class="xbtn" style="left:863px;top:145px;width:33px;height:21px;box-shadow:inset 1px 1px 0 #d6e4e8"><svg style="top:5px" width="11" height="10" viewBox="0 0 11 10"><path d="M1.3 0.8 L9.7 9.2 M9.7 0.8 L1.3 9.2" stroke="#000" stroke-width="2.3"/></svg></div>
<div id="x49" class="t lbl" style="left:428px;top:193px">Target category:</div>
<div id="x50" class="t lbl" style="left:428px;top:228px">Script:</div>
<div id="x51" class="t lbl" style="left:428px;top:256px">Auto-append mode:</div>
<div class="inp" style="left:579px;top:189px;width:270px;height:22px"></div>
<div id="x52" class="t lbl" style="left:584px;top:192px;color:#111">Employee Details</div>
<div class="dots" style="left:829px;top:192px;width:17px;height:16px"></div>
<div class="a" style="left:855px;top:190px;width:21px;height:20px;background:#dcdcdc;border:1px solid #9a9a9a"></div>
<svg class="a" style="left:856px;top:191px" width="19" height="18" viewBox="0 0 19 18"><path d="M4 3.5 L15 14.5 M15 3.5 L4 14.5" stroke="#6e6e6e" stroke-width="3.2" stroke-linecap="round"/></svg>
<div class="inp" style="left:579px;top:224px;width:270px;height:22px"></div>
<div class="dots" style="left:829px;top:227px;width:17px;height:16px"></div>
<div class="a" style="left:855px;top:225px;width:21px;height:20px;background:#dcdcdc;border:1px solid #9a9a9a"></div>
<div class="a" style="left:858px;top:227px;width:15px;height:2px;background:#f0a020"></div>
<svg class="a" style="left:856px;top:230px" width="20" height="13" viewBox="0 0 20 13"><path d="M4 3 L1.5 6.5 L4 10 M16 3 L18.5 6.5 L16 10" stroke="#555" stroke-width="1.1" fill="none"/><text x="10" y="11" text-anchor="middle" font-family="Liberation Sans" font-size="10.5" fill="#555" letter-spacing="-0.3">JS</text></svg>
<div class="a" style="left:579px;top:253px;width:142px;height:20px;background:#fff;border:1px solid #c6c6c6"></div>
<div id="x54" class="t lbl" style="left:582px;top:256px;color:#8c8c8c">Category default</div>
<svg class="a" style="left:708px;top:259px" width="10" height="7" viewBox="0 0 10 7"><path d="M1 1 L5 5 L9 1" stroke="#8a8a8a" stroke-width="1.2" fill="none"/></svg>
<div id="x55" class="btn" style="left:722px;top:519px;width:69px;height:20px">OK</div>
<div id="x56" class="btn" style="left:810px;top:519px;width:69px;height:20px">Cancel</div>

<!-- grid -->
<div id="grid" class="a"></div>
<div class="a" style="left:429px;top:282px;width:429px;height:21px;background:#e8e8e8;border-top:1px solid #f4f4f4;border-left:1px solid #f4f4f4;border-bottom:1px solid #b0b0b0;box-shadow:0 1px 0 #dcdcdc"></div>
<div class="a" style="left:651px;top:283px;width:1px;height:18px;background:#cfcfcf"></div>
<div id="x57" class="t" style="left:450px;top:286px;font-size:11px;color:#555">Category Field</div>
<div id="x58" class="t" style="left:655px;top:286px;font-size:11px;color:#555">Assignment</div>
<div class="a" style="left:429px;top:304px;width:429px;height:205px;overflow:hidden">
<div class="row" style="top:0px;height:16px"><div id="g1" class="ct">DepartmentNo</div><div class="cdiv"></div><div class="rdots"></div><div class="rarr"></div></div>
<div class="row" style="top:16px;height:16px"><div id="g2" class="ct">Employment TypeNo</div><div class="cdiv"></div><div class="rdots"></div><div class="rarr"></div></div>
<div class="row" style="top:32px;height:16px"><div class="ybg"></div><div id="g3" class="ct">Employee No</div><div class="cdiv"></div><div class="rdots"></div><div class="rarr"></div></div>
<div class="row" style="top:48px;height:16px"><div class="ybg"></div><div id="g4" class="ct">First Name</div><div class="cdiv"></div><div class="rdots"></div><div class="rarr"></div></div>
<div class="row" style="top:64px;height:16px"><div class="ybg"></div><div id="g5" class="ct">Job Title</div><div class="cdiv"></div><div class="rdots"></div><div class="rarr"></div></div>
<div class="row" style="top:80px;height:17px"><div class="ybg" style="height:16px"></div><div id="g6" class="ct">Last Name</div><div class="cdiv"></div><div class="rdots"></div><div class="rarr"></div></div>
<div class="row" style="top:97px;height:16px"><div id="g7" class="ct">Department</div><div class="cdiv"></div><div class="rdots"></div><div class="rarr"></div></div>
<div class="row" style="top:113px;height:16px"><div id="g8" class="ct">Date of Birth</div><div class="cdiv"></div><div class="rdots"></div><div class="rarr"></div></div>
<div class="row" style="top:129px;height:16px"><div class="ybg"></div><div id="g9" class="ct">Employment Start Date</div><div class="cdiv"></div><div class="rdots"></div><div class="rarr"></div></div>
<div class="row" style="top:145px;height:16px"><div id="g10" class="ct">Employment Type</div><div class="cdiv"></div><div class="rdots"></div><div class="rarr"></div></div>
<div class="row" style="top:161px;height:16px"><div id="g11" class="ct">Home Address</div><div class="cdiv"></div><div class="rdots"></div><div class="rarr"></div></div>
<div class="row" style="top:177px;height:16px"><div id="g12" class="ct">Salary</div><div class="cdiv"></div><div class="rdots"></div><div class="rarr"></div></div>
<div class="row" style="top:193px;height:16px"><div id="g13" class="ct">Phone Number</div><div class="cdiv"></div><div class="rdots"></div><div class="rarr"></div></div>
</div>
<div class="a" style="left:651px;top:431px;width:208px;height:19px;border:2px solid #2d5da8;border-right:none;background:#e6e6e6"></div>
<div class="rdots" style="left:832px;top:433px;height:15px"></div>
<div class="rarr" style="left:850px;top:438px"></div>
<!-- scrollbar -->
<div class="a" style="left:858px;top:282px;width:18px;height:227px;background:#fff"></div>
<div class="a" style="left:858px;top:474px;width:17px;height:18px;background:#e6e6e6"></div>
<div class="a" style="left:859px;top:283px;width:16px;height:16px;background:#fff;border:1px solid #d0d0d0;border-bottom:2px solid #c8c8c8"></div>
<div class="a" style="left:862px;top:288px;width:0;height:0;border-left:5px solid transparent;border-right:5px solid transparent;border-bottom:5px solid #555"></div>
<div class="a" style="left:859px;top:299px;width:16px;height:175px;background:#fff;border-left:1px solid #e0e0e0;border-right:1px solid #e0e0e0;border-bottom:1px solid #d8d8d8"></div>
<div class="a" style="left:859px;top:492px;width:16px;height:16px;background:#fff;border:1px solid #d0d0d0"></div>
<div class="a" style="left:862px;top:497px;width:0;height:0;border-left:5px solid transparent;border-right:5px solid transparent;border-top:5px solid #555"></div>
</body></html>
